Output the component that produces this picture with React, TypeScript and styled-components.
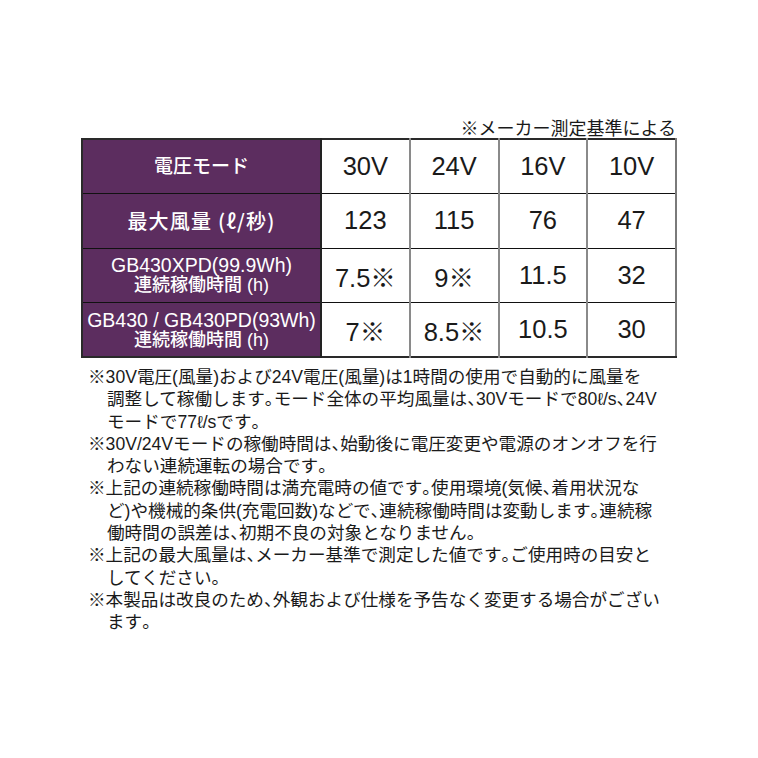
import styled, { createGlobalStyle } from 'styled-components';

const GlobalStyle = createGlobalStyle`
     body {
          margin: 0;
          background: #ffffff;
          font-family: 'Liberation Sans', 'Noto Sans CJK JP', sans-serif;
          color: #1a1a1a;
     }
`;

const Page = styled.div`
     width: 758px;
     height: 758px;
     padding: 116px 0 0 81px;
     box-sizing: border-box;
`;

const Caption = styled.div`
     width: 595px;
     text-align: right;
     font-family: 'Noto Sans CJK JP', sans-serif;
     font-size: 18px;
     line-height: 22px;
     color: #1a1a1a;
`;

const Table = styled.table`
     width: 596px;
     border-collapse: collapse;
     table-layout: fixed;
     border: 2px solid #2a2a2a;
     border-right-color: #7a7a7a;

     col.label {
          width: 239px;
     }
`;

const Row = styled.tr`
     height: 54.5px;
     border-bottom: 1px solid #111;
`;

const Label = styled.th`
     background: #5c2d5f;
     color: #ffffff;
     font-weight: 500;
     text-align: center;
     padding: 0;
     border-right: 2px solid #222;
`;

const LabelLine = styled.div<{ $size: number; $lh: number; $cjk?: boolean }>`
     font-family: ${(p) =>
          p.$cjk ? "'Noto Sans CJK JP'" : "'Liberation Sans', 'Noto Sans CJK JP'"}, sans-serif;
     font-size: ${(p) => p.$size}px;
     line-height: ${(p) => p.$lh}px;
     letter-spacing: ${(p) => (p.$cjk ? '1.2px' : '0')};
     white-space: nowrap;
`;

const Cell = styled.td`
     font-size: 25.5px;
     text-align: center;
     padding: 0;
     color: #1a1a1a;
     border-left: 2px solid #8a8a8a;
`;

const Notes = styled.div`
     margin-top: 7px;
     padding-left: 7px;
     font-family: 'Liberation Sans', 'Noto Sans CJK JP', sans-serif;
     font-size: 17.6px;
     color: #1a1a1a;
`;

const NoteLine = styled.div<{ $first?: boolean }>`
     height: 22.3px;
     line-height: 22.3px;
     padding-left: ${(p) => (p.$first ? '0' : '19px')};
     white-space: nowrap;
`;

// 句読点は半角幅に詰める
const Punct = styled.span`
     font-family: 'Noto Sans CJK JP', sans-serif;
     font-feature-settings: 'halt';
`;

const Mark = styled.span`
     font-family: 'Noto Sans CJK JP', sans-serif;
`;

const rows = [
     {
          label: [{ text: '最大風量 (ℓ/秒)', size: 20, lh: 24, cjk: true }],
          values: ['123', '115', '76', '47'],
     },
     {
          label: [
               { text: 'GB430XPD(99.9Wh)', size: 19.5, lh: 20 },
               { text: '連続稼働時間 (h)', size: 18, lh: 20 },
          ],
          values: ['7.5※', '9※', '11.5', '32'],
     },
     {
          label: [
               { text: 'GB430 / GB430PD(93Wh)', size: 19.5, lh: 20 },
               { text: '連続稼働時間 (h)', size: 18, lh: 20 },
          ],
          values: ['7※', '8.5※', '10.5', '30'],
     },
];

const notes = [
     [
          '※30V電圧(風量)および24V電圧(風量)は1時間の使用で自動的に風量を',
          '調整して稼働します。モード全体の平均風量は、30Vモードで80ℓ/s、24V',
          'モードで77ℓ/sです。',
     ],
     [
          '※30V/24Vモードの稼働時間は、始動後に電圧変更や電源のオンオフを行',
          'わない連続運転の場合です。',
     ],
     [
          '※上記の連続稼働時間は満充電時の値です。使用環境(気候、着用状況な',
          'ど)や機械的条供(充電回数)などで、連続稼働時間は変動します。連続稼',
          '働時間の誤差は、初期不良の対象となりません。',
     ],
     [
          '※上記の最大風量は、メーカー基準で測定した値です。ご使用時の目安と',
          'してください。',
     ],
     ['※本製品は改良のため、外観および仕様を予告なく変更する場合がござい', 'ます。'],
];

const renderLine = (line: string) =>
     line.split(/([、。※])/).map((part, k) => {
          if (part === '、' || part === '。') return <Punct key={k}>{part}</Punct>;
          if (part === '※') return <Mark key={k}>{part}</Mark>;
          return part;
     });

const App = () => {
     return (
          <Page>
               <GlobalStyle />
               <Caption>※メーカー測定基準による</Caption>

               <Table>
                    <colgroup>
                         <col className='label' />
                         <col />
                         <col />
                         <col />
                         <col />
                    </colgroup>
                    <tbody>
                         <Row>
                              <Label>
                                   <LabelLine $size={19} $lh={24}>
                                        電圧モード
                                   </LabelLine>
                              </Label>
                              <Cell>30V</Cell>
                              <Cell>24V</Cell>
                              <Cell>16V</Cell>
                              <Cell>10V</Cell>
                         </Row>
                         {rows.map((row, i) => (
                              <Row key={i}>
                                   <Label>
                                        {row.label.map((line, j) => (
                                             <LabelLine
                                                  key={j}
                                                  $size={line.size}
                                                  $lh={line.lh}
                                                  $cjk={line.cjk}
                                             >
                                                  {line.text}
                                             </LabelLine>
                                        ))}
                                   </Label>
                                   {row.values.map((v, j) => (
                                        <Cell key={j}>{v}</Cell>
                                   ))}
                              </Row>
                         ))}
                    </tbody>
               </Table>

               <Notes>
                    {notes.map((note, i) =>
                         note.map((line, j) => (
                              <NoteLine key={`${i}-${j}`} $first={j === 0}>
                                   {renderLine(line)}
                              </NoteLine>
                         ))
                    )}
               </Notes>
          </Page>
     );
};

export default App;
